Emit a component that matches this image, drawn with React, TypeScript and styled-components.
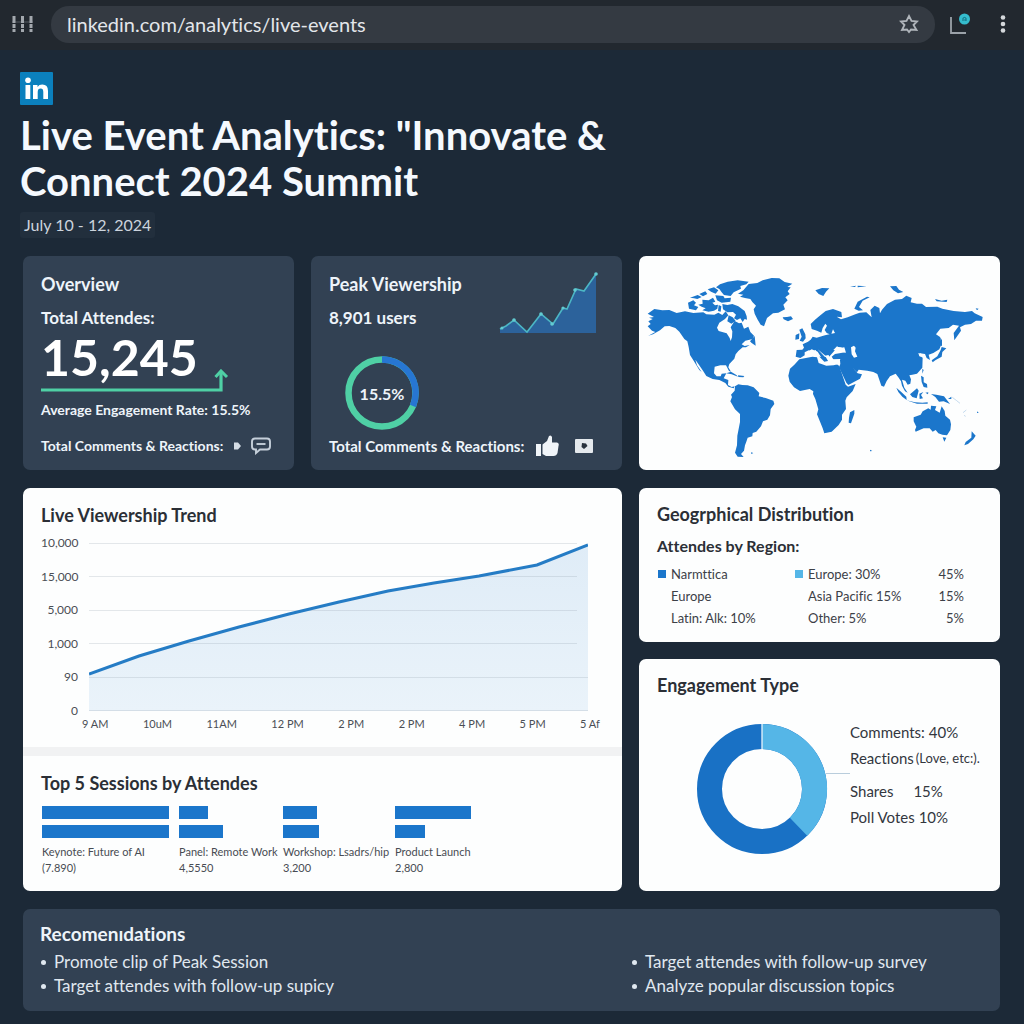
import React from "react";
import styled, { createGlobalStyle } from "styled-components";

const GlobalStyle = createGlobalStyle`
  *, *::before, *::after { box-sizing: border-box; }
  body {
    margin: 0;
    background: #1c2937;
    font-family: Lato, "Open Sans", "Noto Sans", sans-serif;
    font-variant-ligatures: none;
    color: #2b2f36;
  }
  h1, h2, h3, p, ul { margin: 0; padding: 0; }
  svg { display: block; flex: none; }
`;

const BLUE = "#1b76cb";
const SKY = "#55b6e7";
const GREEN = "#4fd0a5";

/* ---------- browser bar ---------- */

const BrowserBar = styled.div`
  display: flex;
  align-items: center;
  height: 50px;
  padding: 0 18px 2px 12px;
  background: #22282f;
`;

const IconButton = styled.button`
  display: flex;
  padding: 0;
  border: 0;
  background: none;
  color: #bfc4ca;
`;

const AddressBar = styled.label`
  display: flex;
  flex: 1;
  align-items: center;
  height: 37px;
  margin: 0 15px 0 18px;
  padding: 0 16px;
  border-radius: 18px;
  background: #343a42;
`;

const UrlInput = styled.input`
  flex: 1;
  min-width: 0;
  padding: 0;
  border: 0;
  outline: 0;
  background: none;
  color: #e3e6ea;
  font: 400 20px/28px Lato, sans-serif;
  font-variant-ligatures: none;
`;

const BarActions = styled.div`
  display: flex;
  align-items: center;
  gap: 28px;
`;

/* ---------- page ---------- */

const Page = styled.main`
  padding: 22px 24px 13px 23px;
`;

const Header = styled.header`
  margin: 0 0 18px -3px;
`;

const Title = styled.h1`
  max-width: 620px;
  margin-top: 7px;
  color: #f5f9fe;
  font-size: 40px;
  line-height: 46px;
  font-weight: 700;
`;

const DateTag = styled.p`
  width: fit-content;
  margin-top: 8px;
  padding: 0 4px;
  border-radius: 3px;
  background: #222f3d;
  color: #ccd4dd;
  font-size: 16px;
  line-height: 26px;
`;

const Dashboard = styled.div`
  display: grid;
  grid-template-columns: 271fr 311fr 361fr;
  gap: 18px 17px;
`;

const Card = styled.section<{ $dark?: boolean; $span?: number }>`
  display: flex;
  flex-direction: column;
  grid-column: span ${(p) => p.$span ?? 1};
  min-width: 0;
  padding: 16px 18px 12px;
  border-radius: 7px;
  background: ${(p) => (p.$dark ? "#324153" : "#fdfefe")};
  color: ${(p) => (p.$dark ? "#eef4fa" : "#2b2f36")};
`;

const CardTitle = styled.h2<{ $large?: boolean }>`
  font-size: ${(p) => (p.$large ? 19 : 18)}px;
  line-height: 24px;
  font-weight: 700;
  white-space: nowrap;
`;

const SubTitle = styled.h3<{ $large?: boolean }>`
  margin-top: ${(p) => (p.$large ? 10 : 8)}px;
  font-size: ${(p) => (p.$large ? 17 : 16)}px;
  line-height: 24px;
  font-weight: 700;
  white-space: nowrap;
`;

const BigNumber = styled.p`
  margin-top: 1px;
  color: #ffffff;
  font-size: 50px;
  line-height: 52px;
  font-weight: 700;
`;

const TrendArrow = styled.svg`
  margin-top: -14px;
`;

const RateLine = styled.p`
  margin-top: 6px;
  font-size: 14px;
  line-height: 24px;
  font-weight: 700;
  white-space: nowrap;
`;

const ReactionRow = styled.div<{ $size: number; $gap: number }>`
  display: flex;
  align-items: center;
  gap: ${(p) => p.$gap}px;
  margin-top: auto;
  font-size: ${(p) => p.$size}px;
  line-height: 24px;
  font-weight: 700;
  white-space: nowrap;
`;

const Split = styled.div`
  display: flex;
  justify-content: space-between;
  padding-right: 6px;
`;

const RingWrap = styled.div`
  display: grid;
  place-items: center;
  width: 74px;
  margin: 22px 0 0 16px;
  font-size: 16px;
  font-weight: 700;

  > * { grid-area: 1 / 1; }
`;

const MapCard = styled(Card)`
  padding: 0;

  svg { width: 100%; height: auto; }
`;

/* ---------- viewership chart ---------- */

const WideCard = styled(Card)`
  padding: 0;
`;

const Panel = styled.div`
  padding: 15px 18px 13px;
`;

const Divider = styled.hr`
  width: 100%;
  height: 9px;
  margin: 0;
  border: 0;
  background: #f1f2f3;
`;

const Chart = styled.div`
  display: grid;
  grid-template-columns: 37px 1fr;
  column-gap: 11px;
  margin-top: 6px;
  padding-right: 16px;
  color: #4a4e55;
  font-size: 12px;
  line-height: 20px;
`;

const YAxis = styled.div`
  display: flex;
  flex-direction: column;
  justify-content: space-between;
  text-align: right;
`;

const Plot = styled.svg`
  width: 100%;
  height: 168px;
  margin: 10px 0;
`;

const XAxis = styled.div`
  display: flex;
  grid-column: 2;
  justify-content: space-between;
  margin: -7px -12px 0 -7px;
  font-size: 11px;
  white-space: nowrap;
`;

const Sessions = styled.div`
  display: grid;
  grid-template-columns: 137fr 104fr 112fr 209fr;
  margin: 11px 0 2px 1px;
`;

const Session = styled.div`
  display: flex;
  flex-direction: column;
  min-width: 0;
  color: #484c53;
  font-size: 11px;
  line-height: 16px;
  white-space: nowrap;
`;

const Bar = styled.div`
  height: 13px;
  margin-bottom: 6px;
  background: ${BLUE};
`;

/* ---------- right column ---------- */

const SideStack = styled.div`
  display: flex;
  flex-direction: column;
  gap: 17px;
  min-width: 0;
`;

const RegionCard = styled(Card)`
  padding: 14px 18px 13px;
`;

const RegionTable = styled.table`
  width: 100%;
  margin-top: 5px;
  border-collapse: collapse;
  color: #3c4047;
  font-size: 13px;
  line-height: 22px;
  white-space: nowrap;

  td { padding: 0; }
  td:first-child { width: 137px; }
  td:last-child { padding-right: 18px; text-align: right; }
`;

const RegionCell = styled.span`
  display: flex;
  align-items: center;
  gap: 5px;
  padding-left: 1px;
`;

const Swatch = styled.i<{ $color?: string }>`
  width: 8px;
  height: 8px;
  background: ${(p) => p.$color ?? "transparent"};
`;

const EngagementCard = styled(Card)`
  flex: 1;
  padding-top: 14px;
`;

const EngagementBody = styled.div`
  display: flex;
  align-items: flex-start;
  margin: 27px 0 0 40px;
`;

const Legend = styled.ul`
  list-style: none;
  margin-top: -5px;
  color: #33373e;
  font-size: 15px;
  line-height: 26px;
  white-space: nowrap;

  li:nth-child(3) { margin-top: 7px; }
`;

const LegendItem = styled.li<{ $gap: number }>`
  display: flex;
  gap: ${(p) => p.$gap}px;
`;

const LegendNote = styled.span`
  font-size: 13px;
`;

const Recommendations = styled(Card)`
  padding: 13px 17px;
`;

const BulletGrid = styled.ul`
  display: grid;
  grid-template-columns: 591fr 352fr;
  margin-top: 4px;
  list-style: none;
  font-size: 17px;
  line-height: 24px;
  color: #e0e8f0;

  li { display: flex; align-items: center; gap: 8px; }
  li::before {
    content: "";
    width: 5px;
    height: 5px;
    margin-left: 1px;
    border-radius: 50%;
    background: currentColor;
  }
`;

/* ---------- drawings ---------- */

const WorldMap = () => (
  <svg viewBox="12 18 1083 642" role="img" aria-label="World map of attendees" fill={BLUE}>
    {/* North America */}
    <path d="M38 191L58 177L82 181L103 180L125 189L150 184L175 189L205 187L214 193L238 194L250 188L262 195L272 184L280 196L270 207L253 218L246 233L251 243L275 250L284 264L287 273L291 262L292 244L287 232L293 222L299 213L312 220L320 218L327 236L340 230L346 246L357 257L353 267L331 272L320 283L329 288L344 285L333 292L323 292L310 303L302 313L298 326L283 342L280 352L288 365L282 363L273 346L256 346L239 350L237 370L245 379L257 379L260 371L274 370L266 385L280 390L279 405L290 411L299 409L296 415L280 410L271 399L253 390L233 387L214 378L203 361L188 339L181 329L186 346L200 366L193 360L176 332L165 315L161 291L157 274L148 267L133 245L121 234L103 228L89 229L75 241L54 253L40 257L61 246L51 242L38 229L47 222L40 214L53 207L42 203L57 201Z" />
    <path d="M159 158L175 151L183 158L177 166L190 171L183 181L162 176ZM165 143L188 135L200 141L187 147L177 145ZM193 132L211 124L217 132L204 139ZM202 149L221 151L234 143L241 155L232 158L240 166L249 164L247 176L237 182L221 185L202 181L212 175L200 170L190 164L203 161ZM218 118L237 112L250 121L242 131L228 125ZM241 136L265 138L269 145L288 143L286 155L260 158L246 151ZM243 112L255 103L278 95L308 91L341 95L334 103L316 108L318 116L296 127L287 138L267 135L260 127L253 117ZM262 162L277 165L292 162L310 169L329 183L335 199L336 209L329 207L323 216L316 205L306 210L297 205L303 194L294 186L277 187L264 178ZM281 196L293 202L302 213L289 221L277 214ZM251 165L259 169L257 185L249 183ZM359 258L362 287L350 279L345 274Z" />
    {/* Greenland and Iceland */}
    <path d="M341 102L367 99L383 91L410 84L433 85L449 96L472 101L457 111L467 112L458 124L464 132L451 142L458 151L445 164L450 178L430 188L414 190L396 204L387 229L377 224L368 209L359 191L356 178L363 167L352 156L346 147L330 144L315 140L325 134L309 131L325 121ZM443 202L456 201L468 199L474 207L459 214L446 208Z" />
    {/* Caribbean */}
    <path d="M274 370L288 365L304 375L309 380L290 373ZM309 376L328 378L325 382L310 381Z" />
    {/* South America */}
    <path d="M300 409L310 403L322 405L338 406L356 412L373 429L371 439L392 444L415 452L418 462L407 477L405 496L397 509L384 514L378 529L364 545L353 549L352 559L338 563L334 575L330 586L327 602L318 612L326 621L308 620L300 608L306 586L307 557L315 516L315 492L300 478L286 454L291 441L288 434L299 422Z" />
    {/* Africa */}
    <path d="M493 328L532 320L546 322L551 339L574 347L596 346L607 343L613 349L632 404L639 410L662 402L653 423L635 442L631 452L633 477L621 494L621 509L611 525L590 545L568 550L563 535L557 520L546 493L550 478L541 447L534 432L535 424L524 417L495 423L477 412L464 395L460 377L465 356L478 344ZM645 487L658 480L658 491L648 520L641 518L642 503Z" />
    {/* Europe, Asia */}
    <path d="M485 300L502 299L507 293L503 283L519 275L527 269L533 260L545 263L570 256L600 249L594 238L588 254L575 249L569 240L576 227L571 221L563 234L559 248L546 242L530 237L527 222L540 209L557 195L572 183L594 177L619 186L621 202L605 200L618 208L638 202L661 193L674 188L694 187L710 202L706 180L719 167L733 174L735 190L741 179L756 162L780 149L801 147L814 137L830 144L827 157L846 161L861 161L873 171L907 170L922 176L956 183L990 186L1011 183L1019 190L1043 201L1041 212L1023 212L1008 222L990 224L975 232L978 242L958 271L956 249L972 227L954 224L941 234L916 236L903 253L915 261L920 281L913 298L895 309L881 314L885 330L875 324L870 312L855 310L855 318L863 323L862 353L846 371L832 374L823 376L828 388L826 401L818 404L811 392L801 389L808 413L818 428L810 424L801 407L798 394L790 382L782 371L765 379L755 393L747 410L739 407L727 372L715 366L697 362L671 359L666 367L651 352L668 370L681 373L675 386L640 405L634 398L612 352L616 342L615 331L597 331L590 320L600 312L631 307L619 292L608 291L595 306L585 317L579 333L568 335L554 321L542 300L531 305L521 301L509 307L509 316L496 324L482 320Z" />
    {/* British Isles and northern islands */}
    <path d="M493 239L502 235L511 253L512 265L504 275L494 272L500 260ZM482 255L493 250L492 267L481 269ZM541 121L561 114L583 115L573 125L565 138L551 132ZM658 176L668 155L696 140L704 142L683 152L672 171L684 181L671 182ZM765 109L784 108L792 119L805 126L789 130L775 121ZM645 110L663 107L660 111ZM668 107L695 109L668 112ZM900 147L920 152L937 149L935 156L905 154ZM1022 175L1031 176L1026 181Z" />
    {/* Seas */}
    <path d="M595 300L606 289L615 294L628 292L633 308L614 304ZM570 317L580 315L591 328L616 327L611 344L583 340ZM521 303L530 298L548 305L558 321L538 317L512 322ZM548 298L565 312L580 324L569 320ZM850 309L859 311L859 320L853 319ZM648 292L657 287L662 293L660 304L667 320L657 323L650 313Z" fill="#fdfefe" />
    {/* Japan, Sakhalin, Taiwan */}
    <path d="M916 262L921 271L921 289L917 286ZM920 291L934 295L922 306L920 320L902 330L893 337L890 331L907 319L917 300ZM862 356L866 360L862 371Z" />
    {/* South-east Asia */}
    <path d="M784 413L798 425L814 440L815 450L802 440L790 426ZM814 451L840 457L862 458L878 457L878 461L846 461ZM825 433L846 415L851 422L845 445L832 441ZM853 431L865 426L858 435L864 445L854 447ZM858 377L866 382L866 397L876 402L877 413L866 411L860 396ZM871 428L880 427L879 433ZM888 432L904 434L927 439L945 462L926 454L912 455L901 441ZM939 447L949 440L949 447Z" />
    {/* Australia, New Zealand and small islands */}
    <path d="M836 502L857 494L863 484L880 475L887 479L888 467L904 469L900 480L914 488L920 469L929 483L931 497L945 509L948 523L946 540L936 556L922 554L910 550L902 540L893 545L884 535L866 535L842 545L840 540L844 530L836 514ZM923 562L934 563L928 575ZM1010 544L1022 557L1015 568L999 582L988 586L992 576L1009 563ZM1027 484L1031 489L1026 489ZM348 607L355 609L349 612ZM705 599L712 603L705 604Z" />
    <path d="M952 442L965 452L975 460M984 488L994 480M987 496L992 499" fill="none" stroke="#a9c8e6" strokeWidth="2" />
  </svg>
);

const yLabels = ["10,000", "15,000", "5,000", "1,000", "90", "0"];
const xLabels = ["9 AM", "10uM", "11AM", "12 PM", "2 PM", "2 PM", "4 PM", "5 PM", "5 Af"];
const curve = "0,131 50,113 100,98 150,84 200,71 250,59 299,48 345,40 390,33 448,22 499,2";

const sessions = [
  { name: "Keynote: Future of AI", value: "(7.890)", bars: [127, 127] },
  { name: "Panel: Remote Work", value: "4,5550", bars: [29, 44] },
  { name: "Workshop: Lsadrs/hip", value: "3,200", bars: [34, 36] },
  { name: "Product Launch", value: "2,800", bars: [76, 30] },
];

export default function App() {
  return (
    <>
      <GlobalStyle />
      <BrowserBar>
        <IconButton aria-label="Apps">
          <svg width="21" height="16" viewBox="0 0 21 16" fill="none" stroke="#a3a8ae" strokeWidth="3">
            <path d="M2 0v16M10.500 0v16M19 0v16" strokeDasharray="7 1 4 1 3" />
            <path d="M0 6h21" strokeWidth="1" opacity=".4" />
          </svg>
        </IconButton>
        <AddressBar>
          <UrlInput aria-label="Address" defaultValue="linkedin.com/analytics/live-events" />
          <IconButton aria-label="Bookmark">
            <svg width="20" height="20" viewBox="0 0 20 20" fill="none" stroke="#b0b5bb" strokeWidth="1.800">
              <path d="M10 2L12.500 7L18 7.500L14.500 11L17.500 16L12 15.500L10 18L8 15.500L3 16L5.500 11L2 7.500L7.500 7Z" />
            </svg>
          </IconButton>
        </AddressBar>
        <BarActions>
          <IconButton aria-label="Notifications">
            <svg width="22" height="22" viewBox="0 0 22 22" fill="none">
              <path d="M1 4v16h15" stroke="#9ba2a9" strokeWidth="1.800" />
              <circle cx="14.500" cy="6" r="5.500" fill="#35bccd" />
              <path d="M13 8V5.500Q14.500 3 16 5.500V8M14 7h1.500" stroke="#16798a" strokeWidth="1.200" />
            </svg>
          </IconButton>
          <IconButton aria-label="More">
            <svg width="6" height="18" viewBox="0 0 6 18" fill="#d5d8dc">
              <circle cx="3" cy="2.500" r="2.300" />
              <circle cx="3" cy="9" r="2.300" />
              <circle cx="3" cy="15.500" r="2.300" />
            </svg>
          </IconButton>
        </BarActions>
      </BrowserBar>

      <Page>
        <Header>
          <svg width="33" height="33" viewBox="0 0 33 33" role="img" aria-label="LinkedIn">
            <rect width="33" height="33" rx="1" fill="#0b80bd" />
            <g fill="#fff">
              <circle cx="8" cy="8.300" r="2.800" />
              <path d="M5.500 13H10.300V27H5.500ZM13 13H17.500V15Q19 12.600 22.300 12.600Q28 12.600 28 19V27H23.300V20Q23.300 16.600 20.700 16.600Q17.700 16.600 17.700 20V27H13Z" />
            </g>
          </svg>
          <Title>Live Event Analytics: "Innovate &amp; Connect 2024 Summit</Title>
          <DateTag>July 10 - 12, 2024</DateTag>
        </Header>

        <Dashboard>
          <Card $dark>
            <CardTitle>Overview</CardTitle>
            <SubTitle $large>Total Attendes:</SubTitle>
            <BigNumber>15,245</BigNumber>
            <TrendArrow width="188" height="23" viewBox="0 0 188 23" fill="none" stroke={GREEN}>
              <path d="M0 21H180V3" strokeWidth="3.200" />
              <path d="M174.500 8L180 2L186 8" strokeWidth="3" />
            </TrendArrow>
            <RateLine>Average Engagement Rate: 15.5%</RateLine>
            <ReactionRow $size={14} $gap={10}>
              Total Comments &amp; Reactions:
              <svg width="8" height="8" viewBox="0 0 8 8" fill="#d5dde5">
                <path d="M1 .5H5L8 4L5 7.500H1Z" />
              </svg>
              <svg width="20" height="18" viewBox="0 0 20 18" fill="none" stroke="#c5cfda" strokeWidth="1.900">
                <path d="M4 1.500H16Q19 1.500 19 4.500V9.500Q19 12.500 16 12.500H9L5 16V12.500H4Q1 12.500 1 9.500V4.500Q1 1.500 4 1.500Z" />
                <path d="M5.500 7H14.500" />
              </svg>
            </ReactionRow>
          </Card>

          <Card $dark>
            <Split>
              <div>
                <CardTitle>Peak Viewership</CardTitle>
                <SubTitle $large>8,901 users</SubTitle>
              </div>
              <svg width="99" height="62" viewBox="0 0 99 62" role="img" aria-label="Viewership sparkline">
                <path d="M1 57L7 54L15 48L28 60L42 42L54 52L64 36L68 37L77 17L85 19L97 2V61H1Z" fill="#2c629b" />
                <path d="M1 57L7 54L15 48L28 60L42 42L54 52L64 36L68 37L77 17L85 19L97 2" fill="none" stroke="#4cb6c5" strokeWidth="1.600" />
                <g fill="#63cbd1">
                  <circle cx="3" cy="56" r="1.500" />
                  <circle cx="15" cy="48" r="1.800" />
                  <circle cx="42" cy="42" r="1.800" />
                  <circle cx="53" cy="52" r="1.800" />
                  <circle cx="64" cy="36" r="1.600" />
                  <circle cx="76" cy="18" r="1.800" />
                  <circle cx="97" cy="2" r="1.800" />
                </g>
              </svg>
            </Split>
            <RingWrap>
              <svg width="74" height="74" viewBox="0 0 74 74" fill="none" strokeWidth="6.500">
                <circle cx="37" cy="37" r="33.500" stroke={GREEN} />
                <path d="M37 3.500A33.500 33.500 0 0 1 68 50" stroke="#2776d2" />
              </svg>
              <span>15.5%</span>
            </RingWrap>
            <ReactionRow $size={15} $gap={12}>
              Total Comments &amp; Reactions:
              <svg width="23" height="22" viewBox="0 0 23 22" fill="#f0f4f8">
                <path d="M0 9H5V21H0ZM6.500 9.500L11 6L13 1Q15 -0.500 16 2V7.500H21Q23.500 8 22.500 11L21.500 18Q20.500 21 17.500 21H10L6.500 19Z" />
              </svg>
              <svg width="22" height="14" viewBox="0 0 22 14">
                <rect x="4" width="18" height="14" rx="1" fill="#e5e9ed" />
                <path d="M11 4L15 4.500L16.500 7L13 10L10.500 8Z" fill="#29323d" />
              </svg>
            </ReactionRow>
          </Card>

          <MapCard><WorldMap /></MapCard>

          <WideCard $span={2}>
            <Panel>
              <CardTitle>Live Viewership Trend</CardTitle>
              <Chart>
                <YAxis>{yLabels.map((l) => <span key={l}>{l}</span>)}</YAxis>
                <Plot viewBox="0 0 499 168" preserveAspectRatio="none" role="img" aria-label="Viewership by hour">
                  <defs>
                    <linearGradient id="area" x1="0" y1="0" x2="0" y2="1">
                      <stop offset="0" stopColor="#dfecf7" />
                      <stop offset="1" stopColor="#eaf3fa" />
                    </linearGradient>
                  </defs>
                  <polygon points={`${curve} 499,168 0,168`} fill="url(#area)" />
                  <path d="M0 .5H488M0 33.500H488M0 67.500H488M0 100.500H488M0 134.500H499M0 167.500H499" stroke="#8794a4" strokeOpacity=".22" />
                  <polyline points={curve} fill="none" stroke="#257cc5" strokeWidth="3" />
                </Plot>
                <XAxis>{xLabels.map((l, i) => <span key={i}>{l}</span>)}</XAxis>
              </Chart>
            </Panel>
            <Divider />
            <Panel>
              <CardTitle>Top 5 Sessions by Attendes</CardTitle>
              <Sessions>
                {sessions.map((s) => (
                  <Session key={s.name}>
                    {s.bars.map((w, i) => <Bar key={i} style={{ width: w }} />)}
                    <span>{s.name}</span>
                    <span>{s.value}</span>
                  </Session>
                ))}
              </Sessions>
            </Panel>
          </WideCard>

          <SideStack>
            <RegionCard>
              <CardTitle>Geogrphical Distribution</CardTitle>
              <SubTitle>Attendes by Region:</SubTitle>
              <RegionTable>
                <tbody>
                  <tr>
                    <td><RegionCell><Swatch $color={BLUE} />Narmttica</RegionCell></td>
                    <td><RegionCell><Swatch $color={SKY} />Europe: 30%</RegionCell></td>
                    <td>45%</td>
                  </tr>
                  <tr>
                    <td><RegionCell><Swatch />Europe</RegionCell></td>
                    <td><RegionCell><Swatch />Asia Pacific 15%</RegionCell></td>
                    <td>15%</td>
                  </tr>
                  <tr>
                    <td><RegionCell><Swatch />Latin: Alk: 10%</RegionCell></td>
                    <td><RegionCell><Swatch />Other: 5%</RegionCell></td>
                    <td>5%</td>
                  </tr>
                </tbody>
              </RegionTable>
            </RegionCard>

            <EngagementCard>
              <CardTitle>Engagement Type</CardTitle>
              <EngagementBody>
                <svg width="153" height="130" viewBox="0 0 153 130" role="img" aria-label="Engagement split">
                  <path d="M129 49.500H153" stroke="#b9cddc" />
                  <circle cx="65" cy="65" r="52.500" fill="none" stroke="#1971c5" strokeWidth="25" />
                  <path d="M65 12.500A52.500 52.500 0 0 1 101.500 102.800" fill="none" stroke={SKY} strokeWidth="25" />
                  <path d="M65 0V25" stroke="#e6f5fc" strokeWidth="1.300" />
                </svg>
                <Legend>
                  <LegendItem $gap={4}><span>Comments:</span><span>40%</span></LegendItem>
                  <LegendItem $gap={2}><span>Reactions</span><LegendNote>(Love, etc:).</LegendNote></LegendItem>
                  <LegendItem $gap={20}><span>Shares</span><span>15%</span></LegendItem>
                  <LegendItem $gap={4}><span>Poll Votes</span><span>10%</span></LegendItem>
                </Legend>
              </EngagementBody>
            </EngagementCard>
          </SideStack>

          <Recommendations $dark $span={3}>
            <CardTitle $large>Recomenıdations</CardTitle>
            <BulletGrid>
              <li>Promote clip of Peak Session</li>
              <li>Target attendes with follow-up survey</li>
              <li>Target attendes with follow-up supicy</li>
              <li>Analyze popular discussion topics</li>
            </BulletGrid>
          </Recommendations>
        </Dashboard>
      </Page>
    </>
  );
}
